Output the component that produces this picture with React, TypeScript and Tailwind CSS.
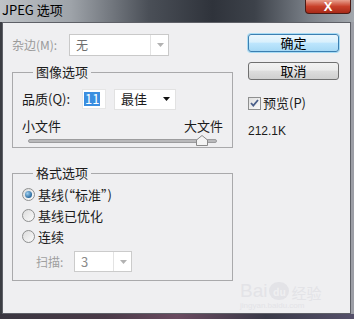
import React from "react";

const font = { fontFamily: '"Noto Sans CJK SC", "Noto Sans", sans-serif' };

const Arrow = ({ color }: { color: string }) => (
  <svg width="7" height="4" viewBox="0 0 7 4">
    <path d="M0 0h7L3.5 4z" fill={color} />
  </svg>
);

const Radio = ({ checked }: { checked?: boolean }) => (
  <span className="w-[13px] h-[13px] rounded-full border border-[#8e8f8f] bg-gradient-to-br from-[#dcdcdc] to-[#fbfbfb] flex items-center justify-center">
    {checked && (
      <span className="w-[7px] h-[7px] rounded-full bg-[radial-gradient(circle_at_35%_35%,#9fd0f0,#2a6a9f_70%,#1d4f7d)]" />
    )}
  </span>
);

const App = () => {
  return (
    <div
      className="w-[354px] h-[319px] flex flex-col bg-[#2c2a31] overflow-hidden text-[12px] text-[#1b1b1b]"
      style={font}
    >
      {/* title bar */}
      <div className="h-[22px] flex items-start bg-[linear-gradient(to_right,#bfc3c7_0%,#9ea3a9_20%,#4a4f57_42%,#2f333b_60%,#3d424a_72%,#7d838b_88%,#a3a8ae_100%)]">
        <span className="ml-[2px] mt-[1px] text-[13px] leading-[18px] text-black">JPEG 选项</span>
        <div className="ml-auto mr-[3px] w-[46px] h-[14px] rounded-b-[4px] border border-t-0 border-[#4a1a14] bg-[linear-gradient(to_bottom,#e8a08e,#c8402a_50%,#a82a18)] flex items-center justify-center">
          <span className="text-white text-[13px] font-bold leading-none" style={{ fontFamily: '"Liberation Sans", sans-serif' }}>
            X
          </span>
        </div>
      </div>

      <div className="flex h-[292px]">
        <div className="w-[2px] bg-[#3b3d43]" />
        <div className="w-[349px] border border-[#5e6067] bg-[#efeff1] flex relative">
          {/* left column */}
          <div className="w-[236px] pl-[9px] flex flex-col">
            <div className="mt-[11px] h-[22px] flex items-center">
              <span className="w-[57px] text-[#9a9a9a]">杂边(M):</span>
              <div className="w-[100px] h-[22px] border border-[#c9c9c9] bg-white flex items-center">
                <span className="ml-[6px] text-[#6e6e6e]">无</span>
                <span className="ml-auto mr-[4px] h-[20px] w-[14px] border-l border-[#e3e3e3] flex items-center justify-end">
                  <Arrow color="#b2b2b2" />
                </span>
              </div>
            </div>

            <fieldset className="mt-[8px] w-[221px] h-[84px] border border-[#a9a9ab]">
              <legend className="ml-[20px] px-[3px] leading-[16px] text-[13px]">图像选项</legend>
              <div className="mt-[9px] pl-[9px] h-[20px] flex items-center">
                <span className="w-[60px] text-[13px]">品质(Q):</span>
                <div className="w-[24px] h-[20px] bg-white border border-[#e6e6e6] flex items-center pl-[1px]">
                  <span className="bg-[#3a8ee0] text-white leading-[14px] px-[1px] text-[13px]">11</span>
                </div>
                <div className="ml-[8px] w-[62px] h-[21px] bg-white border border-[#e2e2e2] flex items-center">
                  <span className="ml-[6px] text-[13px]">最佳</span>
                  <span className="ml-auto mr-[5px] flex">
                    <Arrow color="#111" />
                  </span>
                </div>
              </div>
              <div className="mt-[9px] pl-[9px] pr-[9px] flex justify-between leading-[16px] text-[13px]">
                <span>小文件</span>
                <span>大文件</span>
              </div>
              <div className="mt-[2px] ml-[15px] w-[189px] h-[10px] relative flex items-center">
                <div className="w-full h-[4px] rounded-[2px] bg-[#b9b9bb] border border-[#9c9c9e]" />
                <svg className="absolute left-[168px] top-[-1px]" width="12" height="11" viewBox="0 0 12 11">
                  <path d="M6 0.5L11.5 5v5.5h-11V5z" fill="#f4f4f4" stroke="#8a8a8a" />
                </svg>
              </div>
            </fieldset>

            <fieldset className="mt-[17px] w-[221px] h-[116px] border border-[#a9a9ab]">
              <legend className="ml-[20px] px-[3px] leading-[16px] text-[13px]">格式选项</legend>
              <div className="mt-[3px] pl-[9px] h-[21px] flex items-center gap-[3px] text-[13px]">
                <Radio checked />
                <span>基线(“标准”)</span>
              </div>
              <div className="pl-[9px] h-[21px] flex items-center gap-[3px] text-[13px]">
                <Radio />
                <span>基线已优化</span>
              </div>
              <div className="pl-[9px] h-[21px] flex items-center gap-[3px] text-[13px]">
                <Radio />
                <span>连续</span>
              </div>
              <div className="mt-[4px] pl-[23px] h-[21px] flex items-center">
                <span className="w-[38px] text-[#a0a0a0]">扫描:</span>
                <div className="w-[58px] h-[21px] border border-[#cbcbcb] bg-white flex items-center">
                  <span className="ml-[6px] text-[#8a8a8a] text-[13px]">3</span>
                  <span className="ml-auto mr-[4px] h-[19px] w-[14px] border-l border-[#e3e3e3] flex items-center justify-end">
                    <Arrow color="#b2b2b2" />
                  </span>
                </div>
              </div>
            </fieldset>
          </div>

          {/* right column */}
          <div className="pl-[9px] flex flex-col">
            <button className="mt-[11px] w-[91px] h-[18px] rounded-[3px] border border-[#3c7fb1] bg-[linear-gradient(to_bottom,#eaf6fd_0%,#d9f0fc_45%,#bee6fd_50%,#a7d9f5_100%)] shadow-[0_0_0_1px_#a8dcf5] text-[13px] leading-[16px] text-black">
              确定
            </button>
            <button className="mt-[10px] w-[91px] h-[18px] rounded-[3px] border border-[#707070] bg-[linear-gradient(to_bottom,#f2f2f2_0%,#ebebeb_45%,#dddddd_50%,#cfcfcf_100%)] text-[13px] leading-[16px] text-black">
              取消
            </button>
            <div className="mt-[15px] h-[16px] flex items-center gap-[2px] text-[13px]">
              <span className="w-[13px] h-[13px] border border-[#8e8f8f] bg-gradient-to-br from-[#e0e0e0] to-[#fafafa] flex items-center justify-center">
                <svg width="9" height="8" viewBox="0 0 9 8">
                  <path d="M1 4l2.3 2.6L8 1" fill="none" stroke="#4a5f8a" strokeWidth="1.8" />
                </svg>
              </span>
              <span>预览(P)</span>
            </div>
            <div className="mt-[12px] h-[16px] flex items-center text-[12px]" style={{ fontFamily: '"Liberation Sans", sans-serif' }}>
              212.1K
            </div>
          </div>

          {/* watermark */}
          <div className="absolute left-[237px] top-[258px] flex flex-col items-start text-[#e3e3e7] pointer-events-none">
            <div className="flex items-end">
              <span className="text-[19px] leading-none" style={{ fontFamily: '"Liberation Sans", sans-serif' }}>
                Bai
              </span>
              <span className="mx-[2px] w-[20px] h-[18px] rounded-full bg-[#e3e3e7] text-[#efeff1] text-[10px] font-bold flex items-center justify-center">
                du
              </span>
              <span className="text-[15px] leading-none">经验</span>
            </div>
            <span className="text-[8px] leading-[12px]" style={{ fontFamily: '"Liberation Sans", sans-serif' }}>
              jingyan.baidu.com
            </span>
          </div>
        </div>
        <div className="flex-1 bg-[#9c9ea6]" />
      </div>

      <div className="flex-1 bg-[linear-gradient(to_right,#3a3640,#4a3a48_30%,#6a4a60_50%,#3a3a48_75%,#55506a)]" />
    </div>
  );
};

export default App;
